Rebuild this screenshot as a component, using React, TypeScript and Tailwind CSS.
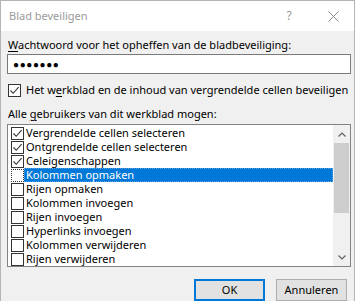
import React from 'react';

const ITEMS = [
  { label: 'Vergrendelde cellen selecteren', checked: true },
  { label: 'Ontgrendelde cellen selecteren', checked: true },
  { label: 'Celeigenschappen', checked: true },
  { label: 'Kolommen opmaken', checked: false, selected: true },
  { label: 'Rijen opmaken', checked: false },
  { label: 'Kolommen invoegen', checked: false },
  { label: 'Rijen invoegen', checked: false },
  { label: 'Hyperlinks invoegen', checked: false },
  { label: 'Kolommen verwijderen', checked: false },
  { label: 'Rijen verwijderen', checked: false },
];

function Check({ checked, focus }: { checked: boolean; focus?: boolean }) {
  return (
    <div className={`w-[13px] h-[13px] shrink-0 bg-white border ${focus ? 'border-dotted border-[#333]' : 'border-[#333]'} flex items-center justify-center`}>
      {checked && (
        <svg width="11" height="11" viewBox="0 0 11 11">
          <path d="M1.5 5.5 L4.2 8.3 L9.6 2.2" fill="none" stroke="#333" strokeWidth="1.1" />
        </svg>
      )}
    </div>
  );
}

export default function App() {
  return (
    <div className="w-[357px] h-[308px] bg-white" style={{ fontFamily: '"Noto Sans", "Open Sans", sans-serif' }}>
      <div className="w-[355px] h-[301px] border border-[#b4b4b4] flex flex-col">
        <div className="h-[30px] bg-white flex items-center text-[11px] text-[#9a9a9a] pl-[8px] shrink-0">
          <span className="flex-1">Blad beveiligen</span>
          <span className="w-[14px] text-center mr-[32px] text-[12px]">?</span>
          <svg width="11" height="11" viewBox="0 0 11 11" className="mr-[15px]">
            <path d="M0.5 0.5 L10.5 10.5 M10.5 0.5 L0.5 10.5" stroke="#8a8a8a" strokeWidth="1" />
          </svg>
        </div>
        <div className="flex-1 bg-[#f0f0f0] pl-[6px] pr-[3px] text-[11px] text-black leading-[14px] whitespace-nowrap">
          <div className="pt-[7px] pl-[1px]">
            <span className="underline underline-offset-2">W</span>achtwoord voor het opheffen van de bladbeveiliging:
          </div>
          <div className="mt-[2px] h-[20px] bg-white border border-[#7a7a7a] flex items-center pl-[5px] text-[10px] tracking-[0.6px]">
            ●●●●●●●
          </div>
          <div className="mt-[9px] flex items-center gap-[5px] pl-[1px]">
            <Check checked />
            <span>
              Het w<span className="underline underline-offset-2">e</span>rkblad en de inhoud van vergrendelde cellen beveiligen
            </span>
          </div>
          <div className="mt-[10px] pl-[1px]">
            Alle <span className="underline underline-offset-2">g</span>ebruikers van dit werkblad mogen:
          </div>
          <div className="mt-[3px] h-[143px] bg-white border border-[#828282] flex">
            <div className="flex-1 pt-[1px] pl-[3px]">
              {ITEMS.map((it) => (
                <div key={it.label} className="h-[14px] flex items-center">
                  <Check checked={it.checked} focus={it.selected} />
                  <div
                    className={`flex-1 h-[14px] pl-[2px] flex items-center ${
                      it.selected ? 'bg-[#0078d7] text-white outline outline-1 outline-dotted outline-[#5aa0e0] -outline-offset-1' : ''
                    }`}
                  >
                    {it.label}
                  </div>
                </div>
              ))}
            </div>
            <div className="w-[17px] bg-[#f0f0f0] flex flex-col">
              <div className="h-[18px] flex items-center justify-center">
                <svg width="8" height="5" viewBox="0 0 8 5">
                  <path d="M0.5 4.5 L4 1 L7.5 4.5" fill="none" stroke="#606060" strokeWidth="1.2" />
                </svg>
              </div>
              <div className="h-[70px] mx-[1px] bg-[#cdcdcd]" />
              <div className="flex-1" />
              <div className="h-[18px] flex items-center justify-center">
                <svg width="8" height="5" viewBox="0 0 8 5">
                  <path d="M0.5 0.5 L4 4 L7.5 0.5" fill="none" stroke="#606060" strokeWidth="1.2" />
                </svg>
              </div>
            </div>
          </div>
          <div className="mt-[12px] flex justify-end gap-[11px] pr-[4px]">
            <button className="w-[71px] h-[22px] bg-[#e1e1e1] border-2 border-[#0078d7] text-[11px]">OK</button>
            <button className="w-[71px] h-[22px] bg-[#e1e1e1] border border-[#adadad] text-[11px]">Annuleren</button>
          </div>
        </div>
      </div>
    </div>
  );
}
